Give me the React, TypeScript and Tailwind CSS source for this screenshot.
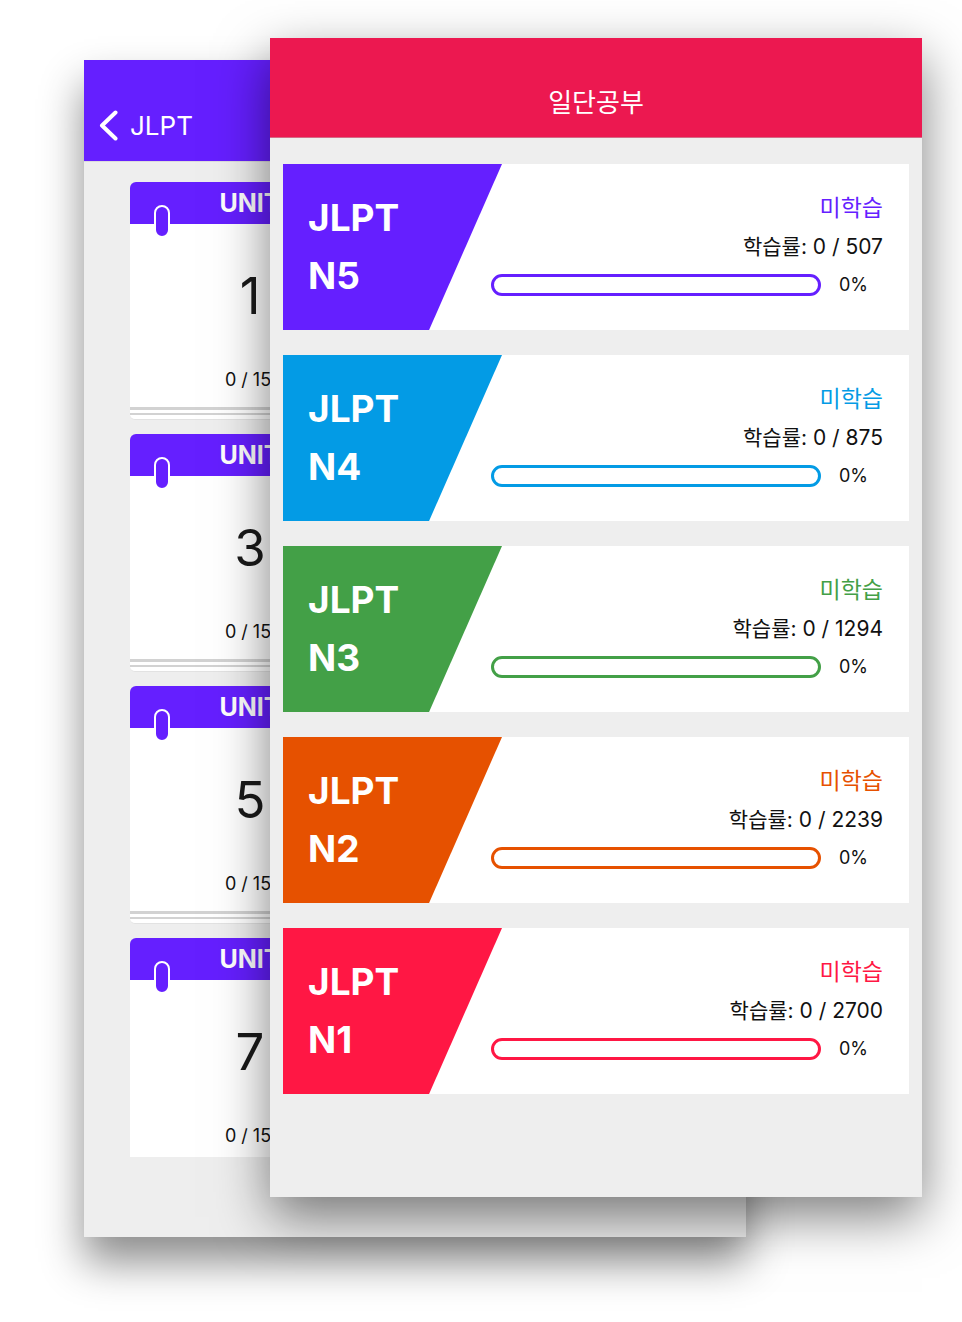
const levels = [
  { name: 'N5', total: 507, bg: 'bg-[#651FFF]', text: 'text-[#651FFF]', border: 'border-[#651FFF]' },
  { name: 'N4', total: 875, bg: 'bg-[#039BE5]', text: 'text-[#039BE5]', border: 'border-[#039BE5]' },
  { name: 'N3', total: 1294, bg: 'bg-[#43A047]', text: 'text-[#43A047]', border: 'border-[#43A047]' },
  { name: 'N2', total: 2239, bg: 'bg-[#E65100]', text: 'text-[#E65100]', border: 'border-[#E65100]' },
  { name: 'N1', total: 2700, bg: 'bg-[#FF1744]', text: 'text-[#FF1744]', border: 'border-[#FF1744]' },
];

const units = [1, 2, 3, 4, 5, 6, 7, 8];

function UnitCard({ n }: { n: number }) {
  return (
    <div className="relative">
      <div className="h-[42px] rounded-t-md bg-[#651FFF] flex items-center justify-center">
        <span className="text-[25px] font-bold text-white leading-none">UNIT</span>
      </div>
      <div className="absolute left-[24px] top-[23px] w-[16px] h-[33px] rounded-full bg-[#651FFF] border-[2.5px] border-white" />
      <div className="h-[183px] bg-white flex flex-col items-center">
        <span className="mt-[42px] text-[51px] leading-[60px] text-[#1a1a1a]">{n}</span>
        <span className="mt-[42px] -ml-[4px] text-[18px] leading-[24px] text-[#111]">0 / 15</span>
      </div>
      <div className="h-[3px] bg-[#d2d2d2]" />
      <div className="h-[3px] bg-white" />
      <div className="h-[2px] bg-[#d2d2d2]" />
      <div className="h-[5px] bg-white rounded-b-md border-b border-[#e2e2e2]" />
    </div>
  );
}

function LevelCard({ level }: { level: (typeof levels)[number] }) {
  return (
    <div className="relative flex h-[166px] bg-white">
      <div
        className={`absolute inset-y-0 left-0 w-[219px] ${level.bg} [clip-path:polygon(0_0,100%_0,66.7%_100%,0_100%)]`}
      />
      <div className="relative w-[208px] shrink-0 pl-[25px] pt-[25px] text-white font-bold text-[37px] leading-[58px]">
        <div>JLPT</div>
        <div>{level.name}</div>
      </div>
      <div className="relative flex-1 flex flex-col items-end pr-[26px] pt-[29px]">
        <span className={`text-[23px] leading-[30px] ${level.text}`}>미학습</span>
        <span className="mt-[10px] text-[21px] leading-[28px] text-[#111]">
          학습률: 0 / {level.total}
        </span>
        <div className="mt-[13px] w-full flex items-center">
          <div className={`flex-1 h-[22px] rounded-full border-[3px] bg-white ${level.border}`} />
          <span className="w-[44px] ml-[18px] text-[18px] leading-[22px] text-[#111]">0%</span>
        </div>
      </div>
    </div>
  );
}

export default function App() {
  return (
    <div className="relative w-[962px] h-[1322px] bg-white overflow-hidden [font-family:Inter,'Noto_Sans_CJK_KR',sans-serif]">
      {/* back screen: unit list */}
      <div className="absolute left-[84px] top-[60px] w-[662px] h-[1177px] bg-[#EEEEEE] flex flex-col shadow-[0_25px_40px_rgba(0,0,0,0.45)]">
        <div className="h-[102px] shrink-0 bg-[#651FFF] flex items-center pt-[30px] pl-[15px] gap-[12px] border-b border-[#dcdcdc]">
          <svg width="19" height="31" viewBox="0 0 19 31" fill="none">
            <path d="M16.5 2.5 L3 15.5 L16.5 28.5" stroke="white" strokeWidth="4" strokeLinecap="round" strokeLinejoin="round" />
          </svg>
          <span className="text-[26px] text-white leading-none">JLPT</span>
        </div>
        <div className="h-[995px] overflow-hidden pt-[20px] px-[46px]">
          <div className="grid grid-cols-[240px_240px] gap-x-[90px] gap-y-[14px]">
            {units.map((n) => (
              <UnitCard key={n} n={n} />
            ))}
          </div>
        </div>
      </div>

      {/* front screen: level list */}
      <div className="absolute left-[270px] top-[38px] w-[652px] h-[1159px] bg-[#EEEEEE] flex flex-col shadow-[0_20px_50px_rgba(0,0,0,0.5)]">
        <div className="h-[100px] shrink-0 bg-[#EC1850] border-b border-[#d46a86] flex items-center justify-center pt-[30px]">
          <span className="text-[26px] text-white leading-none">일단공부</span>
        </div>
        <div className="flex flex-col gap-[25px] pt-[26px] px-[13px]">
          {levels.map((l) => (
            <LevelCard key={l.name} level={l} />
          ))}
        </div>
      </div>
    </div>
  );
}
